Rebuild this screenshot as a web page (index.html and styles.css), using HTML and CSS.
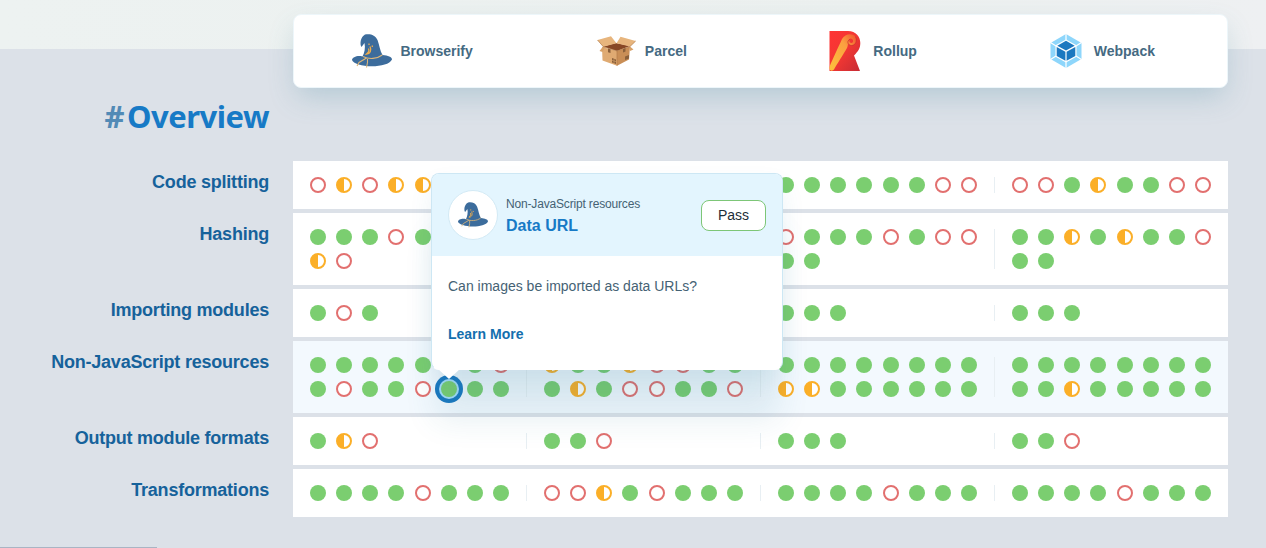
FILE: index.html
```
<!DOCTYPE html>
<html lang="en">
<head>
<meta charset="utf-8">
<title>Overview</title>
<link rel="stylesheet" href="styles.css">
</head>
<body>
<svg width="0" height="0" class="defs">
  <defs>
    <linearGradient id="red" x1="0" y1="0" x2="1" y2="1"><stop offset="0" stop-color="#ff3434"/><stop offset=".5" stop-color="#f23733"/><stop offset="1" stop-color="#c62c35"/></linearGradient>
    <linearGradient id="gold" x1="1" y1="0" x2="0" y2="1"><stop offset="0" stop-color="#f0502e"/><stop offset=".35" stop-color="#fba040"/><stop offset="1" stop-color="#fdc13c"/></linearGradient>
  </defs>
  <symbol id="hat" viewBox="0 0 40 40">
    <path fill="#3c6c9c" d="M10.500 25.500C12.500 22 13.500 17 12.500 12L9.500 16C7.500 13 8.500 6 13 3.500C18 2.300 23.500 4 25.500 9C27.500 14 28 20 30.500 24C36 24.500 40 26 40 28.500C38 33 29 35.300 20 35.300C10 35.300 1 32.500 0 29C0 26 6 24 10.500 25.500Z"/>
    <path fill="none" stroke="#dcb67a" stroke-width="1.100" d="M11 25.500C17 28.500 25 28 30.300 24M14.500 27L7 31.500L5 35M15.500 27V31.500L14.500 36.500"/>
    <path fill="none" stroke="#efad4d" stroke-width="1.300" d="M18 15.500C20 19.500 18 23 14.500 23C16.500 21.500 17.500 19.500 16.500 17.500M20 14.500L20.500 16M17 12.500V14"/>
  </symbol>
  <symbol id="box" viewBox="0 0 40 40">
    <path fill="#874725" d="M6 15.500L19 12L33 15L20 20Z"/>
    <path fill="#dfaa72" d="M5 16L20 20V34.700L5.500 29.500Z"/>
    <path fill="#c98e56" d="M20 20L33 15.500L32 28.500L20 34.700Z"/>
    <path fill="#e7b57d" d="M.5 9L14 5.300L19.500 12.300L6.300 15.700ZM19.500 12.300L23.500 5.700L38.700 10L33 15.500Z"/>
    <path fill="#d7a168" d="M6 15.500L2.500 20L5.500 21L8 16ZM33 15.500L36.500 18.500L33 20Z"/>
    <path fill="none" stroke="#b17b48" stroke-width=".7" d="M.5 9L6.300 15.700L20 20L33 15.500L38.700 10M20 20V34.700"/>
    <path fill="#8b603a" d="M11 17.500L13.500 18.300V22L11 21.300ZM26 18L28.500 17V20.500L26 21.500ZM15 27L19 28.500V33L15 31.500ZM28 25.500L32 24V27.500L28 29Z"/>
    <path stroke="#d5a16c" stroke-width=".6" d="M15 29.300L19 30.700M17 28V32.500"/>
  </symbol>
  <symbol id="scroll" viewBox="0 0 40 40">
    <path fill="url(#red)" d="M4.500 0H23C31 0 35.300 6 35.300 12C35.300 17 33.500 20 29 24.500L35 40H4.500Z"/>
    <path fill="url(#gold)" d="M4.500 36C7 29 14 15 17 8C20 2.500 27 2 30.500 5.500C32.500 10 30.500 14.500 26.500 14.500C22.500 14.500 21.500 9.500 25 8.500C23.500 10.500 25 12 26.500 12C29 11.500 28.500 7.500 25.500 7.500C22 8 24 13 22 17C18 24 12 33 9 38.500C7.500 40.500 4 40 4.500 36Z"/>
    <path fill="none" stroke="#c52d2e" stroke-width=".7" d="M30.500 5.500C32.500 10 30.500 14.500 26.500 14.500C22.500 14.500 21.500 9.500 25 8.500"/>
  </symbol>
  <symbol id="cube" viewBox="0 0 40 40">
    <path fill="#8ed6fb" d="M20 3L35.500 12V28L20 37L4.500 28V12Z"/>
    <path fill="#fff" d="M20 8.500L30.500 14.300V25.700L20 31.500L9.500 25.700V14.300Z"/>
    <path stroke="#fff" stroke-width="1.200" d="M20 3V9M20 31V37M4.500 11.500L10 15M30 15L35.500 11.500M4.500 28.500L10 25M30 25L35.500 28.500"/>
    <path fill="#1c78c0" d="M20 9.800L28.700 14.700L20 19.500L11.300 14.700ZM10.700 16L19.400 20.700V29.800L10.700 25ZM29.300 16L20.600 20.700V29.800L29.300 25Z"/>
  </symbol>
</svg>
<div class="hero"></div>
<main class="page">
  <header class="tools">
    <div class="tool"><svg class="logo"><use href="#hat"/></svg>Browserify</div>
    <div class="tool"><svg class="logo"><use href="#box"/></svg>Parcel</div>
    <div class="tool"><svg class="logo"><use href="#scroll"/></svg>Rollup</div>
    <div class="tool"><svg class="logo"><use href="#cube"/></svg>Webpack</div>
  </header>
  <h1 class="heading"><span class="hash">#</span>Overview</h1>
  <section class="table">
    <div class="row"><h3 class="label">Code splitting</h3><div class="cells">
      <div class="cell"><i class="fail"></i><i class="part"></i><i class="fail"></i><i class="part"></i><i class="part"></i><i class="pass"></i><i class="pass"></i><i class="fail"></i></div>
      <div class="cell"><i class="pass"></i><i class="pass"></i><i class="pass"></i><i class="pass"></i><i class="pass"></i><i class="pass"></i><i class="fail"></i><i class="fail"></i></div>
      <div class="cell"><i class="pass"></i><i class="pass"></i><i class="pass"></i><i class="pass"></i><i class="pass"></i><i class="pass"></i><i class="fail"></i><i class="fail"></i></div>
      <div class="cell"><i class="fail"></i><i class="fail"></i><i class="pass"></i><i class="part"></i><i class="pass"></i><i class="pass"></i><i class="fail"></i><i class="fail"></i></div>
    </div></div>
    <div class="row"><h3 class="label">Hashing</h3><div class="cells">
      <div class="cell"><i class="pass"></i><i class="pass"></i><i class="pass"></i><i class="fail"></i><i class="pass"></i><i class="pass"></i><i class="pass"></i><i class="pass"></i><i class="part"></i><i class="fail"></i></div>
      <div class="cell"><i class="pass"></i><i class="pass"></i><i class="pass"></i><i class="pass"></i><i class="pass"></i><i class="pass"></i><i class="fail"></i><i class="fail"></i><i class="pass"></i><i class="pass"></i></div>
      <div class="cell"><i class="fail"></i><i class="pass"></i><i class="pass"></i><i class="pass"></i><i class="fail"></i><i class="pass"></i><i class="fail"></i><i class="fail"></i><i class="pass"></i><i class="pass"></i></div>
      <div class="cell"><i class="pass"></i><i class="pass"></i><i class="part"></i><i class="pass"></i><i class="part"></i><i class="pass"></i><i class="pass"></i><i class="fail"></i><i class="pass"></i><i class="pass"></i></div>
    </div></div>
    <div class="row"><h3 class="label">Importing modules</h3><div class="cells">
      <div class="cell"><i class="pass"></i><i class="fail"></i><i class="pass"></i></div>
      <div class="cell"><i class="pass"></i><i class="pass"></i><i class="pass"></i></div>
      <div class="cell"><i class="pass"></i><i class="pass"></i><i class="pass"></i></div>
      <div class="cell"><i class="pass"></i><i class="pass"></i><i class="pass"></i></div>
    </div></div>
    <div class="row"><h3 class="label">Non-JavaScript resources</h3><div class="cells active">
      <div class="cell"><i class="pass"></i><i class="pass"></i><i class="pass"></i><i class="pass"></i><i class="pass"></i><i class="pass"></i><i class="pass"></i><i class="fail"></i><i class="pass"></i><i class="fail"></i><i class="pass"></i><i class="pass"></i><i class="fail"></i><i class="pass selected"></i><i class="pass"></i><i class="pass"></i></div>
      <div class="cell"><i class="part"></i><i class="pass"></i><i class="pass"></i><i class="part"></i><i class="fail"></i><i class="fail"></i><i class="pass"></i><i class="pass"></i><i class="pass"></i><i class="part"></i><i class="pass"></i><i class="fail"></i><i class="fail"></i><i class="pass"></i><i class="pass"></i><i class="fail"></i></div>
      <div class="cell"><i class="pass"></i><i class="pass"></i><i class="pass"></i><i class="pass"></i><i class="pass"></i><i class="pass"></i><i class="pass"></i><i class="pass"></i><i class="part"></i><i class="part"></i><i class="pass"></i><i class="pass"></i><i class="pass"></i><i class="pass"></i><i class="pass"></i><i class="pass"></i></div>
      <div class="cell"><i class="pass"></i><i class="pass"></i><i class="pass"></i><i class="pass"></i><i class="pass"></i><i class="pass"></i><i class="pass"></i><i class="pass"></i><i class="pass"></i><i class="pass"></i><i class="part"></i><i class="pass"></i><i class="pass"></i><i class="pass"></i><i class="pass"></i><i class="pass"></i></div>
    </div></div>
    <div class="row"><h3 class="label">Output module formats</h3><div class="cells">
      <div class="cell"><i class="pass"></i><i class="part"></i><i class="fail"></i></div>
      <div class="cell"><i class="pass"></i><i class="pass"></i><i class="fail"></i></div>
      <div class="cell"><i class="pass"></i><i class="pass"></i><i class="pass"></i></div>
      <div class="cell"><i class="pass"></i><i class="pass"></i><i class="fail"></i></div>
    </div></div>
    <div class="row"><h3 class="label">Transformations</h3><div class="cells">
      <div class="cell"><i class="pass"></i><i class="pass"></i><i class="pass"></i><i class="pass"></i><i class="fail"></i><i class="pass"></i><i class="pass"></i><i class="pass"></i></div>
      <div class="cell"><i class="fail"></i><i class="fail"></i><i class="part"></i><i class="pass"></i><i class="fail"></i><i class="pass"></i><i class="pass"></i><i class="pass"></i></div>
      <div class="cell"><i class="pass"></i><i class="pass"></i><i class="pass"></i><i class="pass"></i><i class="fail"></i><i class="pass"></i><i class="pass"></i><i class="pass"></i></div>
      <div class="cell"><i class="pass"></i><i class="pass"></i><i class="pass"></i><i class="pass"></i><i class="fail"></i><i class="pass"></i><i class="pass"></i><i class="pass"></i></div>
    </div></div>
  </section>
</main>
<aside class="popup">
  <div class="popup-head">
    <div class="avatar"><svg class="avatar-icon"><use href="#hat"/></svg></div>
    <div class="titles"><div class="category">Non-JavaScript resources</div><div class="title">Data URL</div></div>
    <div class="result">Pass</div>
  </div>
  <div class="popup-body">
    <p class="question">Can images be imported as data URLs?</p>
    <a class="more">Learn More</a>
  </div>
</aside>
<div class="status"></div>
</body>
</html>
```
FILE: styles.css
```
* { box-sizing: border-box; }
body {
  margin: 0;
  height: 548px;
  overflow: hidden;
  position: relative;
  background: #dce1e8;
  font-family: "Liberation Sans", Arial, sans-serif;
}
.defs { position: absolute; }
.hero {
  position: absolute;
  inset: 0 0 auto;
  height: 49px;
  background: linear-gradient(90deg, #edf2f1, #ecf0ef 70%, #eef0f2);
}
.page { position: relative; padding: 14px 38px 0 0; }
.tools {
  display: grid;
  grid-template-columns: repeat(4, 1fr);
  height: 74px;
  margin-left: 293px;
  padding: 0 12px 0 4px;
  background: #fff;
  border: 1px solid #edf6fa;
  border-radius: 8px;
  box-shadow: 0 12px 28px -4px rgba(75, 140, 160, .28);
}
.tool {
  display: flex;
  align-items: center;
  justify-content: center;
  gap: 8px;
  color: #456a82;
  font-size: 14px;
  font-weight: 700;
}
.logo { width: 40px; height: 40px; }
.heading {
  width: 269px;
  margin: 4px 0 0;
  height: 69px;
  line-height: 48px;
  text-align: right;
  font-family: "Noto Sans", "Open Sans", sans-serif;
  font-size: 31px;
  font-weight: 700;
  letter-spacing: -.5px;
  color: #177ac6;
}
.hash { margin-right: 3px; color: #528ab6; }
.table { display: grid; gap: 4px; }
.row { display: grid; grid-template-columns: 269px 1fr; column-gap: 24px; }
.label {
  margin: 10px 0 0;
  text-align: right;
  font-size: 18px;
  line-height: 22px;
  letter-spacing: -.22px;
  color: #16629b;
}
.cells { display: grid; grid-template-columns: repeat(3, 234px) 1fr; background: #fff; }
.cells.active { background: #f3f9fe; }
.cell {
  display: grid;
  grid-template-columns: repeat(8, 26.16px);
  grid-auto-rows: 16px;
  row-gap: 8px;
  justify-items: center;
  margin: 16px 0;
  padding-left: 11.93px;
  border-right: 1px solid #e8eff3;
}
.cell:last-child { border-color: transparent; }
.pass, .fail, .part { width: 16px; height: 16px; border-radius: 50%; }
.pass { background: #7bce70; }
.fail { border: 2px solid #e2706f; background: #fff; }
.part { border: 2px solid #fbaf28; background: linear-gradient(90deg, #fbaf28 50%, #fff 50%); }
.selected { box-shadow: 0 0 0 2px #a6ddfa, 0 0 0 6px #1b78c0; }
.popup {
  position: absolute;
  left: 431px;
  top: 173px;
  width: 352px;
  height: 197px;
  border: 1px solid #cde7f4;
  border-bottom-color: #fff;
  border-radius: 8px;
  background: #fff;
  box-shadow: 0 54px 32px -4px rgba(40, 115, 150, .11), 0 12px 24px -2px rgba(40, 115, 160, .1);
}
.popup::after {
  content: "";
  position: absolute;
  left: 6px;
  top: 195px;
  border: solid transparent;
  border-width: 10px 11px 0;
  border-top-color: #fff;
}
.popup-head {
  display: flex;
  align-items: center;
  gap: 8px;
  height: 82px;
  padding: 0 16px;
  border-radius: 7px 7px 0 0;
  background: #e3f5fe;
}
.avatar {
  display: grid;
  place-items: center;
  width: 50px;
  height: 50px;
  border: 1px solid #d3eaf5;
  border-radius: 50%;
  background: #fff;
}
.avatar-icon { width: 30px; height: 30px; }
.titles { flex: 1; padding-top: 2px; }
.category { font-size: 12px; line-height: 18px; letter-spacing: -.17px; color: #456274; }
.title { padding-top: 1px; font-size: 16px; line-height: 24px; font-weight: 700; color: #177ac6; }
.result {
  width: 65px;
  height: 31px;
  border: 1px solid #7dc677;
  border-radius: 8px;
  background: #fff;
  color: #1c2e38;
  font-size: 14px;
  line-height: 29px;
  text-align: center;
}
.popup-body { padding: 20px 16px; font-size: 14px; line-height: 20px; }
.question { margin: 0 0 28px; color: #456274; }
.more { font-weight: 700; color: #146fae; }
.status { position: absolute; left: 0; bottom: 0; width: 157px; height: 1px; background: #a9b4c3; }
```
